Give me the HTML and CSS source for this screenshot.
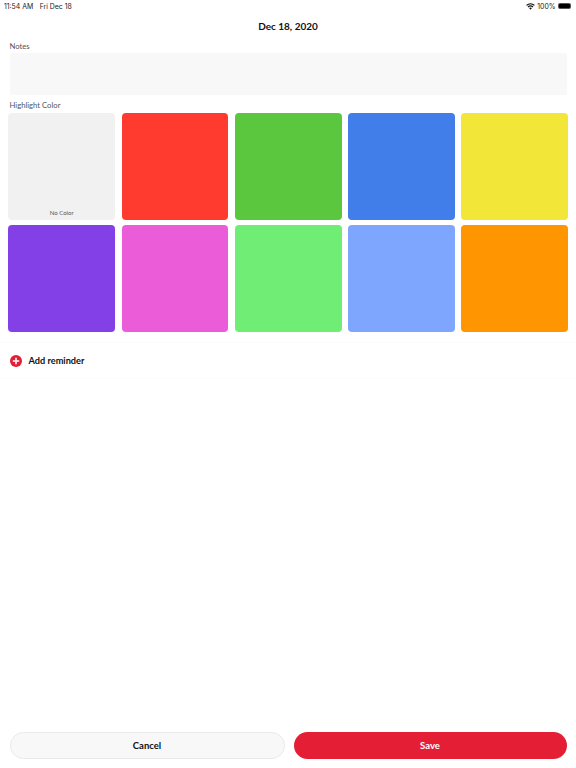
FILE: index.html
```html
<!DOCTYPE html>
<html>

<head>
  <link rel="stylesheet" href="styles.css">
  <title>Highlight</title>
</head>
<body>
  <div class="status-bar">
    <div class="status-time"><span>11:54 AM</span><span class="status-date">Fri Dec 18</span></div>
    <div class="status-right">
      <svg class="wifi" width="9" height="7" viewBox="0 0 10 8">
        <path d="M5 7.6 3.4 5.8a2.3 2.3 0 0 1 3.2 0z" fill="#111"/>
        <path d="M2.6 5 1.7 4a4.8 4.8 0 0 1 6.6 0l-.9 1a3.5 3.5 0 0 0-4.8 0z" fill="#111"/>
        <path d="M1 3.2 0 2.2a7.3 7.3 0 0 1 10 0l-1 1a5.9 5.9 0 0 0-8 0z" fill="#111"/>
      </svg>
      <span>100%</span>
      <div class="battery"><div class="battery-fill"></div></div>
    </div>
  </div>

  <h1 class="title">Dec 18, 2020</h1>

  <div class="field-label">Notes</div>
  <div class="notes"></div>

  <div class="field-label color-label">Highlight Color</div>
  <div class="color-grid">
    <div class="swatch no-color">No Color</div>
    <div class="swatch red"></div>
    <div class="swatch green"></div>
    <div class="swatch blue"></div>
    <div class="swatch yellow"></div>
    <div class="swatch purple"></div>
    <div class="swatch pink"></div>
    <div class="swatch mint"></div>
    <div class="swatch sky"></div>
    <div class="swatch orange"></div>
  </div>

  <div class="reminder">
    <svg width="12" height="12" viewBox="0 0 12 12">
      <circle cx="6" cy="6" r="6" fill="#e41e35"/>
      <path d="M6 2.8v6.4M2.8 6h6.4" stroke="#fff" stroke-width="1.5"/>
    </svg>
    <span>Add reminder</span>
  </div>

  <div class="buttons">
    <button class="cancel">Cancel</button>
    <button class="save">Save</button>
  </div>
</body>

</html>
```

FILE: styles.css
```css
html,
body {
  height: 100%;
}

body {
  margin: 0;
  display: flex;
  flex-direction: column;
  box-sizing: border-box;
  font-family: "Lato", "Open Sans", sans-serif;
  background-color: #fff;
  color: #111;
  overflow: hidden;
}

.status-bar {
  display: flex;
  justify-content: space-between;
  align-items: center;
  height: 12px;
  padding: 0 4.5px 0 4px;
  font-family: "Inter", sans-serif;
  font-size: 6.9px;
  color: #222;
}

.status-date {
  margin-left: 6.5px;
}

.status-right {
  display: flex;
  align-items: center;
  gap: 2px;
}

.wifi {
  margin-right: 0.5px;
}

.battery {
  width: 13.5px;
  height: 6px;
  margin-right: 0.5px;
  padding: 1px;
  box-sizing: border-box;
  border-radius: 2px;
  background-color: #555;
}

.battery-fill {
  height: 100%;
  border-radius: 1px;
  background-color: #000;
}

.title {
  margin: 6px 0 0;
  height: 17px;
  line-height: 17px;
  font-size: 10px;
  font-weight: 700;
  text-align: center;
}

.field-label {
  margin: 4px 0 0 9.5px;
  height: 14px;
  line-height: 14px;
  font-size: 7.7px;
  color: #555;
}

.notes {
  height: 42px;
  margin: 0 9.5px;
  border-radius: 2px;
  background-color: #f8f8f8;
}

.color-label {
  margin-top: 3px;
  height: 15px;
}

.color-grid {
  display: grid;
  grid-template-columns: repeat(5, 106.8px);
  grid-auto-rows: 107px;
  gap: 5px 6.5px;
  padding-left: 8.3px;
}

.swatch {
  border-radius: 4px;
}

.no-color {
  display: flex;
  align-items: flex-end;
  justify-content: center;
  padding-bottom: 3px;
  box-sizing: border-box;
  font-size: 6px;
  line-height: 8px;
  color: #555;
  background-color: #f1f1f1;
}

.red { background-color: #ff3b30; }
.green { background-color: #5ac73f; }
.blue { background-color: #417ee9; }
.yellow { background-color: #f2e638; }
.purple { background-color: #8340e6; }
.pink { background-color: #eb5cd9; }
.mint { background-color: #70ed75; }
.sky { background-color: #7ea6ff; }
.orange { background-color: #ff9500; }

.reminder {
  display: flex;
  align-items: center;
  gap: 6.5px;
  height: 35px;
  margin-top: 10px;
  padding-left: 10px;
  border-top: 1px solid #fcfcfc;
  border-bottom: 1px solid #fcfcfc;
  font-size: 9.2px;
  font-weight: 700;
}

.buttons {
  display: flex;
  gap: 9px;
  margin-top: auto;
  padding: 0 9.5px 9.5px;
}

button {
  flex: 1 1 0;
  height: 27px;
  padding: 0;
  border-radius: 14px;
  font-family: "Lato", "Open Sans", sans-serif;
  font-size: 9.5px;
  font-weight: 700;
}

.cancel {
  border: 1px solid #e9e9e9;
  background-color: #f8f8f8;
  color: #111;
}

.save {
  border: none;
  background-color: #e41e35;
  color: #fff;
}
```
